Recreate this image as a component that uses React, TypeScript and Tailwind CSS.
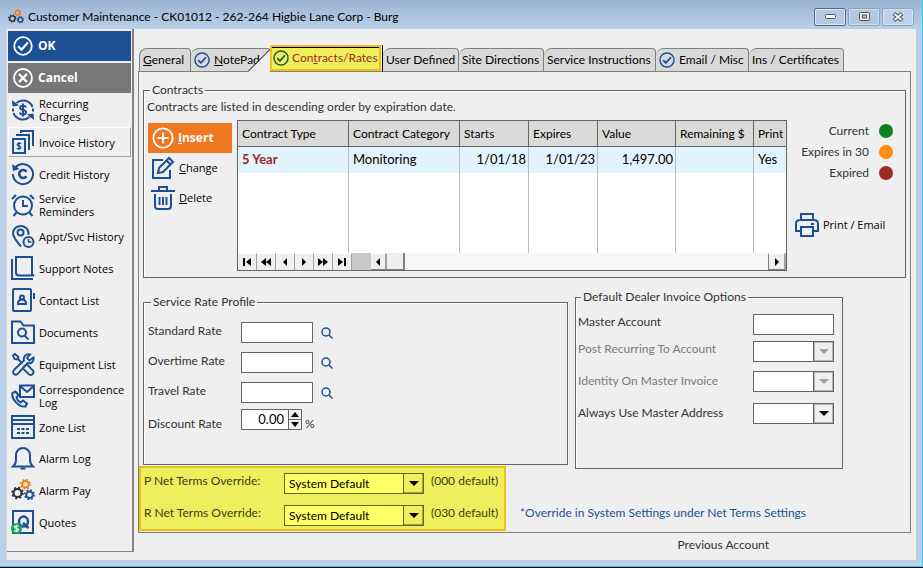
import React from "react";

const BLUE = "#1c4f94";

type GearProps = { cx: number; cy: number; r: number; color: string };

const Gear = ({ cx, cy, r, color }: GearProps) => {
  const teeth = (2 * Math.PI * (r + 1.4)) / 16;
  return (
    <g fill="none" stroke={color}>
      <circle cx={cx} cy={cy} r={r} strokeWidth="2" />
      <circle cx={cx} cy={cy} r={r + 1.4} strokeWidth="1.6" strokeDasharray={`${teeth} ${teeth}`} />
    </g>
  );
};

const GearsIcon = ({ className }: { className: string }) => (
  <svg viewBox="0 0 24 22" className={className}>
    <Gear cx={14.5} cy={5.3} r={3.3} color="#f47b20" />
    <Gear cx={6.5} cy={14} r={4} color="#2d2d2d" />
    <Gear cx={18.5} cy={15.7} r={3.3} color={BLUE} />
  </svg>
);

const Icon = ({ children, className = "size-6" }: { children: React.ReactNode; className?: string }) => (
  <svg viewBox="0 0 24 24" className={`shrink-0 ${className}`} fill="none" stroke={BLUE} strokeWidth="2">
    {children}
  </svg>
);

const CheckCircle = ({ color = BLUE, className }: { color?: string; className: string }) => (
  <svg viewBox="0 0 20 20" className={`shrink-0 ${className}`} fill="none" stroke={color}>
    <circle cx="10" cy="10" r="8.8" strokeWidth="1.8" />
    <path d="M5.2 10.2 8.6 13.6 15 6.6" strokeWidth="2.2" />
  </svg>
);

const menu = [
  {
    label: "Recurring Charges",
    height: "h-[30px]",
    icon: (
      <Icon>
        <path d="M5.500 5A10 10 0 0 1 21.500 9M18.500 19A10 10 0 0 1 2.500 15M2 13.500v-3M22 10.500v3" />
        <path d="M1 2 1.500 8.500 8 7.500zM23 22 22.500 15.500 16 16.500z" fill={BLUE} stroke="none" />
        <path d="M15 9.300C14.500 8 13.400 7.700 12 7.700c-1.700 0-2.900.8-2.900 2.100 0 3 6 1.500 6 4.500 0 1.300-1.300 2.100-3 2.100-1.600 0-2.800-.6-3.200-2M12 5.500v13" />
      </Icon>
    ),
  },
  {
    label: "Invoice History",
    height: "h-[30px]",
    icon: (
      <Icon>
        <path d="M2 9h12v14H2zM6 6V5h12v15M10 3V1H22v15" />
        <path d="M10.200 13.800C9.500 12.700 6.200 12.800 6.200 14.500c0 1.800 3.800 1.200 3.800 3.100 0 1.600-3.400 1.700-4.100.4M8 12v8" strokeWidth="1.300" />
      </Icon>
    ),
  },
  {
    label: "Credit History",
    height: "h-[30px]",
    icon: (
      <Icon>
        <path d="M4.500 5.500A10 10 0 1 1 2 12" />
        <path d="M1 2 2 9 8.500 7z" fill={BLUE} stroke="none" />
        <path d="M15.500 9.800A4 4 0 1 0 15.500 14.200" strokeWidth="2.600" />
      </Icon>
    ),
  },
  {
    label: "Service Reminders",
    height: "h-[28px]",
    icon: (
      <Icon>
        <circle cx="12" cy="12.500" r="9" />
        <path d="M12 7v6h5M1 6 5 2M23 6 19 2M6 19l-3.500 4M18 19l3.500 4" />
      </Icon>
    ),
  },
  {
    label: "Appt/Svc History",
    height: "h-[30px]",
    icon: (
      <Icon>
        <path d="M10 22.500C5 17 2 13 2 8.800A7.800 7.800 0 0 1 17.500 8.800q0 1-.3 2" />
        <circle cx="9.500" cy="8.500" r="3" />
        <circle cx="17.500" cy="18" r="5" />
        <path d="M17.500 15v3h3" strokeWidth="1.500" />
      </Icon>
    ),
  },
  {
    label: "Support Notes",
    height: "h-[30px]",
    icon: (
      <Icon>
        <path d="M5 1h16v17.500l2 1H8q-3 0-3-3zM1 3v20h21" />
      </Icon>
    ),
  },
  {
    label: "Contact List",
    height: "h-[30px]",
    icon: (
      <Icon>
        <rect x="2" y="1" width="18" height="22" rx="1.500" />
        <path d="M23 5v6" />
        <circle cx="11" cy="9.500" r="2" />
        <path d="M7 16c0-3 1.500-4.500 4-4.500s4 1.500 4 4.500z" />
      </Icon>
    ),
  },
  {
    label: "Documents",
    height: "h-[30px]",
    icon: (
      <Icon>
        <path d="M1 1.500h8.500l3 4H23V23H1z" />
        <circle cx="11" cy="12.500" r="4" />
        <path d="m13.500 15.500 4 4" />
      </Icon>
    ),
  },
  {
    label: "Equipment List",
    height: "h-[30px]",
    icon: (
      <Icon>
        <path d="M2 3.500 4 2l3.500 3L6 7.500 3.500 7zM6.500 6.500l5 5M13 14.500l3-2 6 6c1.500 3-1.500 5.500-4 4l-6-6z" strokeWidth="1.900" />
        <path d="M22.500 5.500c.8 4.500-2.500 6.500-6 5.500L7 21.500c-3 3-6.500-.5-4-3.500L13 8.500c-1-3.500 1.500-7 6-6l-3 3.500 2.500 2.500z" strokeWidth="1.900" />
      </Icon>
    ),
  },
  {
    label: "Correspondence Log",
    height: "h-[30px]",
    icon: (
      <Icon>
        <path d="M9 1.500h14v11.500H9zM9 2l7 6 7-6" />
        <path d="M4.500 7.500 1.500 9C0 15 8 23.500 14.500 22.500l1.500-3-4-3-2.500 2c-2-1-3.500-3-4-5L7.500 11z" />
      </Icon>
    ),
  },
  {
    label: "Zone List",
    height: "h-[28px]",
    icon: (
      <Icon>
        <path d="M1 1h22v22H1zM1 5h22M1 9h22" />
        <path d="M6 14h12M6 18h12" strokeDasharray="3 1.500" />
      </Icon>
    ),
  },
  {
    label: "Alarm Log",
    height: "h-[30px]",
    icon: (
      <Icon>
        <path d="M2 20.500c2.500-2 3-4 3-7V9a7 7 0 0 1 14 0v4.500c0 3 .5 5 3 7z" />
        <path d="M9.500 22.500h5" />
      </Icon>
    ),
  },
  { label: "Alarm Pay", height: "h-[30px]", icon: <GearsIcon className="h-[22px] w-6 shrink-0" /> },
  {
    label: "Quotes",
    height: "h-[30px]",
    icon: (
      <Icon>
        <rect x="2" y="1" width="20" height="22" />
        <ellipse cx="12.500" cy="11.500" rx="4.500" ry="5" strokeWidth="2.500" />
        <path d="m12 13 5.500 5" strokeWidth="2.500" />
        <circle cx="5.500" cy="18.500" r="5.500" fill="#12a84b" stroke="none" />
        <path d="M7.500 16.500c-1-1-4-.9-4 .6 0 1.700 4 1 4 2.800 0 1.500-3.200 1.700-4.200.4M5.500 14.800v7.400" stroke="#fff" strokeWidth="1.200" />
      </Icon>
    ),
  },
];

const Sidebar = () => (
  <nav className="flex w-[127px] shrink-0 flex-col gap-0.5 self-start border-r-2 border-b border-[#848484] pt-0.5 pr-px pb-3.5 pl-px font-['Open_Sans','Noto_Sans',sans-serif] text-[11px] leading-[13px]">
    <button className="flex h-[30px] items-center gap-[5px] bg-[#1c4f94] pl-[5px] text-xs font-bold text-white">
      <CheckCircle color="#fff" className="size-5" />
      OK
    </button>
    <button className="flex h-[30px] items-center gap-[5px] bg-[#777777] pl-[5px] text-xs font-bold text-white">
      <svg viewBox="0 0 20 20" className="size-5 shrink-0" fill="none" stroke="#fff">
        <circle cx="10" cy="10" r="9" strokeWidth="1.800" />
        <path d="m6 6 8 8M14 6l-8 8" strokeWidth="2.400" />
      </svg>
      Cancel
    </button>
    {menu.map((item) => (
      <button
        key={item.label}
        className={`flex items-center gap-1 border pl-0.5 text-left text-black ${item.height} ${
          item.label === "Invoice History" ? "border-t-white border-r-[#a0a0a0] border-b-[#a0a0a0] border-l-white" : "border-transparent"
        }`}
      >
        {item.icon}
        <span>{item.label}</span>
      </button>
    ))}
  </nav>
);

const tabs = [
  { label: <><u>G</u>eneral</>, width: "w-[52px]" },
  { label: <><u>N</u>otePad</>, width: "w-20", check: true },
  { label: <>Con<u>t</u>racts/Rates</>, width: "", active: true },
  { label: "User Defined", width: "w-[76px]" },
  { label: "Site Directions", width: "w-[85px]" },
  { label: "Service Instructions", width: "w-[112px]" },
  { label: "Email / Misc", width: "w-[93px]", check: true },
  { label: "Ins / Certificates", width: "w-[95px]" },
];

const Tabs = () => (
  <div className="flex items-end pl-px" role="tablist">
    {tabs.map((tab, index) =>
      tab.active ? (
        <button key={index} role="tab" aria-selected="true" className="z-10 -mb-px -ml-[23px] flex h-[27px] whitespace-nowrap text-[#a52a1c]">
          <svg viewBox="0 0 22 27" className="h-[27px] w-[22px]">
            <path d="M0 27 22 5V27z" fill="#efefef" />
            <path d="M0 26.500 22 4.500" stroke="#000" fill="none" />
          </svg>
          <span className="flex h-[26px] w-[111px] items-center gap-[3px] border-2 border-[#f0c010] bg-[#efef5e] pl-px shadow-[inset_0_1px_0_#000]">
            <CheckCircle color="#1f5a33" className="size-4" />
            <span>{tab.label}</span>
          </span>
          <span className="ml-px h-[27px] border-r border-black" />
        </button>
      ) : (
        <button
          key={index}
          role="tab"
          aria-selected="false"
          className={`flex h-[23px] items-center gap-1 rounded-tl-lg rounded-tr-sm border border-b-0 border-l-0 border-[#808080] bg-[#d9d9d9] pl-[3px] whitespace-nowrap text-black first:border-l ${tab.width}`}
        >
          {tab.check && <CheckCircle className="size-4" />}
          <span>{tab.label}</span>
        </button>
      )
    )}
  </div>
);

const columns = [
  { name: "Contract Type", value: "5 Year", col: "w-[111px]", cell: "font-bold text-[#a0282a]" },
  { name: "Contract Category", value: "Monitoring", col: "w-[111px]", cell: "" },
  { name: "Starts", value: "1/01/18", col: "w-[69px]", cell: "text-right" },
  { name: "Expires", value: "1/01/23", col: "w-[69px]", cell: "text-right" },
  { name: "Value", value: "1,497.00", col: "w-[78px]", cell: "text-right" },
  { name: "Remaining $", value: "", col: "w-[78px]", cell: "" },
  { name: "Print", value: "Yes", col: "", cell: "" },
];

const pagers = [
  { name: "First", d: "M1 1h2v8H1zM9 1v8L4 5z" },
  { name: "Page back", d: "M5 1v8L0 5zM10 1v8L5 5z" },
  { name: "Previous", d: "M7 1v8L3 5z" },
  { name: "Next", d: "M3 1v8l4-4z" },
  { name: "Page forward", d: "M0 1v8l5-4zM5 1v8l5-4z" },
  { name: "Last", d: "M1 1v8l5-4zM7 1h2v8H7z" },
];

const ArrowButton = ({ name, d, className }: { name: string; d: string; className: string }) => (
  <button aria-label={name} className={`flex shrink-0 items-center justify-center border-t border-r border-t-white border-r-[#a0a0a0] bg-[#efefef] ${className}`}>
    <svg viewBox="0 0 10 10" className="size-2.5">
      <path d={d} />
    </svg>
  </button>
);

const ContractsGrid = () => (
  <div className="min-w-0 flex-1 border border-[#646464] bg-white">
    <table className="w-full table-fixed border-separate border-spacing-0 text-black">
      <thead>
        <tr className="h-[26px] bg-[#dadad8] text-left">
          {columns.map((c) => (
            <th key={c.name} className={`overflow-hidden border-r border-b border-[#646464] px-1 py-0 font-normal whitespace-nowrap last:border-r-0 ${c.col}`}>
              {c.name}
            </th>
          ))}
        </tr>
      </thead>
      <tbody>
        <tr className="h-[26px] bg-[#e1f3fc] text-[13px]">
          {columns.map((c) => (
            <td key={c.name} className={`border-r border-[#bcbcbc] py-0 pr-0.5 pl-1 last:border-r-0 ${c.cell}`}>
              {c.value}
            </td>
          ))}
        </tr>
        <tr className="h-20">
          {columns.map((c) => (
            <td key={c.name} className="border-r border-[#bcbcbc] p-0 last:border-r-0" />
          ))}
        </tr>
      </tbody>
    </table>
    <div className="flex h-[17px] bg-[#f6f6f6]">
      {pagers.map((p) => (
        <ArrowButton key={p.name} name={p.name} d={p.d} className="w-[19px]" />
      ))}
      <span className="w-[19px] bg-[#c8c8c8]" />
      <ArrowButton name="Scroll left" d="M7 1v8L3 5z" className="w-4 border-r-2 border-b border-b-[#808080]" />
      <span className="w-[18px] border-r-2 border-b border-[#808080] bg-[#efefef]" />
      <span className="flex-1" />
      <ArrowButton name="Scroll right" d="M3 1v8l4-4z" className="w-[18px] border-r-2 border-b border-l border-[#808080]" />
    </div>
  </div>
);

const statuses = [
  { name: "Current", color: "bg-[#0c8220]" },
  { name: "Expires in 30", color: "bg-[#ff8c14]" },
  { name: "Expired", color: "bg-[#a02c28]" },
];

const Group = ({ title, className, children }: { title: string; className: string; children: React.ReactNode }) => (
  <fieldset className={`min-w-0 border border-[#646464] shadow-[inset_1px_1px_0_#fff] ${className}`}>
    <legend className="ml-[3px] bg-[#efefef] px-0.5 leading-4">{title}</legend>
    {children}
  </fieldset>
);

const Contracts = () => (
  <Group title="Contracts" className="mx-1 mt-2.5 pr-0 pb-1.5 pl-[3px]">
    <p className="mt-px leading-4">Contracts are listed in descending order by expiration date.</p>
    <div className="mt-[5px] flex">
      <div className="mt-[3px] mr-[5px] ml-px flex w-[84px] shrink-0 flex-col font-['Open_Sans','Noto_Sans',sans-serif] text-[11px] text-black">
        <button className="flex h-[30px] items-center gap-1 bg-[#f07820] pl-1 text-xs font-bold text-white">
          <Icon className="size-[22px]">
            <g stroke="#fff">
              <circle cx="12" cy="12" r="10.500" />
              <path d="M12 6v12M6 12h12" />
            </g>
          </Icon>
          <span><u>I</u>nsert</span>
        </button>
        <button className="flex h-[30px] items-center gap-1 pl-[3px]">
          <Icon>
            <path d="M12 4H2v18h17v-8" />
            <path d="m7 17 1-5L18 2l4 4-10 10zM15.500 4.500l4 4" />
          </Icon>
          <span><u>C</u>hange</span>
        </button>
        <button className="flex h-[30px] items-center gap-1 pl-[3px]">
          <Icon>
            <path d="M0 5h24M8 5V1h8v4M4 8v12q0 3 3 3h10q3 0 3-3V8M8.500 11v8M12 11v8M15.500 11v8" />
          </Icon>
          <span><u>D</u>elete</span>
        </button>
      </div>
      <ContractsGrid />
      <div className="flex w-[118px] shrink-0 flex-col">
        <ul className="mr-3 flex flex-col">
          {statuses.map((s) => (
            <li key={s.name} className="flex h-[21px] items-center justify-end gap-2.5 leading-4">
              {s.name}
              <span className={`size-3.5 rounded-full ${s.color}`} />
            </li>
          ))}
        </ul>
        <button className="mt-[30px] ml-2 flex items-center gap-1 font-['Open_Sans','Noto_Sans',sans-serif] text-[11px] text-black">
          <Icon>
            <path d="M6 7V1h12v6M6 18H1v-7q0-4 4-4h14q4 0 4 4v7h-5M6 14h12v9H6zM16 11h3" />
          </Icon>
          Print / Email
        </button>
      </div>
    </div>
  </Group>
);

const rates = ["Standard Rate", "Overtime Rate", "Travel Rate"];

const ServiceRateProfile = () => (
  <Group title="Service Rate Profile" className="mt-4 h-[171px] flex-1 px-1">
    <div className="mt-3 flex flex-col gap-[9px]">
      {rates.map((rate) => (
        <div key={rate} className="flex h-[21px]">
          <label htmlFor={rate} className="w-[93px] leading-[18px]">{rate}</label>
          <input id={rate} className="h-[21px] w-[72px] border border-[#646464] bg-white px-1 text-black" />
          <button aria-label={`Find ${rate}`} className="ml-2">
            <svg viewBox="0 0 12 12" className="size-3" fill="none" stroke={BLUE} strokeWidth="1.500">
              <circle cx="5" cy="5" r="4" />
              <path d="m8 8 3.500 3.500" />
            </svg>
          </button>
        </div>
      ))}
    </div>
    <div className="mt-1.5 flex h-[21px] items-end">
      <label htmlFor="discount" className="w-[93px] leading-3">Discount Rate</label>
      <div className="flex h-[21px] w-[61px] border border-[#646464]">
        <input id="discount" defaultValue="0.00" className="w-[46px] bg-white pr-1 text-right text-[13px] text-black" />
        <div className="flex flex-1 flex-col border-l border-[#646464]">
          <button aria-label="Increase" className="flex flex-1 items-center justify-center border-b border-[#646464]">
            <svg viewBox="0 0 8 5" className="h-[5px] w-2"><path d="M0 5 4 0l4 5z" /></svg>
          </button>
          <button aria-label="Decrease" className="flex flex-1 items-center justify-center">
            <svg viewBox="0 0 8 5" className="h-[5px] w-2"><path d="M0 0h8L4 5z" /></svg>
          </button>
        </div>
      </div>
      <span className="ml-[3px] leading-3">%</span>
    </div>
  </Group>
);

const Combo = ({ id, disabled, yellow, className }: { id: string; disabled?: boolean; yellow?: boolean; className: string }) => (
  <div className={`relative h-[21px] ${className}`}>
    <select
      id={id}
      disabled={disabled}
      className={`size-full appearance-none border pl-1 text-black disabled:opacity-100 ${yellow ? "border-[#66661f] bg-[#ffff66]" : "border-[#646464] bg-white"}`}
    >
      <option>{yellow ? "System Default" : ""}</option>
    </select>
    <span
      className={`pointer-events-none absolute top-0 right-0 flex h-full w-[21px] items-center justify-center border ${
        yellow
          ? "border-[#66661f] bg-[#efef5e] shadow-[inset_-1px_-1px_0_#a0a040]"
          : "border-[#646464] bg-[#efefef] shadow-[inset_0_0_0_1px_#b4b4b4]"
      }`}
    >
      <svg viewBox="0 0 10 5" className="h-[5px] w-2.5" fill={disabled ? "#a0a0a0" : "#000"}>
        <path d="M0 0h10L5 5z" />
      </svg>
    </span>
  </div>
);

const DealerOptions = () => (
  <Group title="Default Dealer Invoice Options" className="mt-[11px] mr-[67px] ml-[7px] h-[180px] w-[268px] shrink-0 pr-2 pl-0.5">
    <div className="mt-[9px] flex h-[27px] justify-between">
      <label htmlFor="master" className="leading-4">Master Account</label>
      <input id="master" className="h-[21px] w-[81px] border border-[#646464] bg-white px-1 text-black" />
    </div>
    <div className="flex h-[30px] justify-between text-[#7a7a7a]">
      <label htmlFor="post" className="leading-4">Post Recurring To Account</label>
      <Combo id="post" disabled className="w-[81px]" />
    </div>
    <div className="flex h-8 justify-between text-[#7a7a7a]">
      <label htmlFor="identity" className="leading-5">Identity On Master Invoice</label>
      <Combo id="identity" disabled className="w-[81px]" />
    </div>
    <div className="flex justify-between">
      <label htmlFor="always" className="leading-5">Always Use Master Address</label>
      <Combo id="always" className="w-[81px]" />
    </div>
  </Group>
);

const terms = [
  { id: "p-terms", label: "P Net Terms Override:", note: "(000 default)" },
  { id: "r-terms", label: "R Net Terms Override:", note: "(030 default)" },
];

const NetTerms = () => (
  <div className="-mt-[3px] flex items-end">
    <div className="flex h-[65px] w-[367px] flex-col gap-[11px] border-2 border-[#f0c010] bg-[#efef5e] pt-[5px] pl-[3px] text-[#3c3c14]">
      {terms.map((t) => (
        <div key={t.id} className="flex h-[21px]">
          <label htmlFor={t.id} className="w-[140px] leading-4">{t.label}</label>
          <Combo id={t.id} yellow className="w-[140px]" />
          <span className="ml-[7px] leading-4">{t.note}</span>
        </div>
      ))}
    </div>
    <p className="mb-2 ml-3.5 leading-5 text-[#1c4f94]">*Override in System Settings under Net Terms Settings</p>
  </div>
);

const TitleBar = () => (
  <header className="flex h-[29px] items-center gap-1 bg-linear-to-b from-[#9ab3d1] to-[#b9d1ea] pt-1 pr-2 pl-2 text-black">
    <GearsIcon className="h-[15px] w-4" />
    <h1 className="flex-1">Customer Maintenance - CK01012 - 262-264 Higbie Lane Corp - Burg</h1>
    <div className="flex gap-0.5">
      <button aria-label="Minimize" className="flex h-[18px] w-8 items-center justify-center rounded-xs border border-[#54698a] bg-[#b4cae3] shadow-[inset_0_0_0_1px_#dbe7f4]">
        <svg viewBox="0 0 11 5" className="h-[5px] w-[11px]"><rect x=".5" y=".5" width="10" height="4" rx="1" fill="#fff" stroke="#555" /></svg>
      </button>
      <button aria-label="Maximize" className="flex h-[18px] w-8 items-center justify-center rounded-xs border border-[#8da3c0] bg-[#b1c8e2] shadow-[inset_0_0_0_1px_#c9dbee]">
        <svg viewBox="0 0 11 9" className="h-[9px] w-[11px]" fill="#e8e8e8" stroke="#555">
          <rect x=".5" y=".5" width="10" height="8" rx="1" />
          <rect x="3.500" y="3" width="4" height="3" fill="#b1c8e2" />
        </svg>
      </button>
      <button aria-label="Close" className="flex h-[18px] w-8 items-center justify-center rounded-xs border border-[#8da3c0] bg-[#bcd2ec] shadow-[inset_0_0_0_1px_#d3e2f2]">
        <svg viewBox="0 0 12 10" className="h-2.5 w-3" fill="none">
          <path d="m2 1.500 8 7M10 1.500l-8 7" stroke="#555" strokeWidth="4" />
          <path d="m2.500 2 7 6M9.500 2l-7 6" stroke="#eee" strokeWidth="2" />
        </svg>
      </button>
    </div>
  </header>
);

const App = () => {
  return (
    <div className="flex min-h-screen flex-col border-b border-black bg-[#bbd1ea] font-['Lato','Open_Sans',sans-serif] text-xs text-[#333333]">
      <div className="flex flex-1 flex-col border-r border-b border-[#2fc8e8]">
        <TitleBar />
        <div className="mr-1.5 mb-1.5 ml-1.5 flex flex-1 border-l border-[#d8d8d8] bg-[#efefef]">
          <Sidebar />
          <main className="flex min-w-0 flex-1 flex-col pt-4 pr-[5px] pl-1">
            <Tabs />
            <section className="flex flex-1 flex-col border border-[#808080]">
              <Contracts />
              <div className="flex items-start pl-1">
                <ServiceRateProfile />
                <DealerOptions />
              </div>
              <NetTerms />
            </section>
            <footer className="flex h-[27px] items-start justify-end pt-1 pr-[142px] leading-4">Previous Account</footer>
          </main>
        </div>
      </div>
    </div>
  );
};

export default App;
